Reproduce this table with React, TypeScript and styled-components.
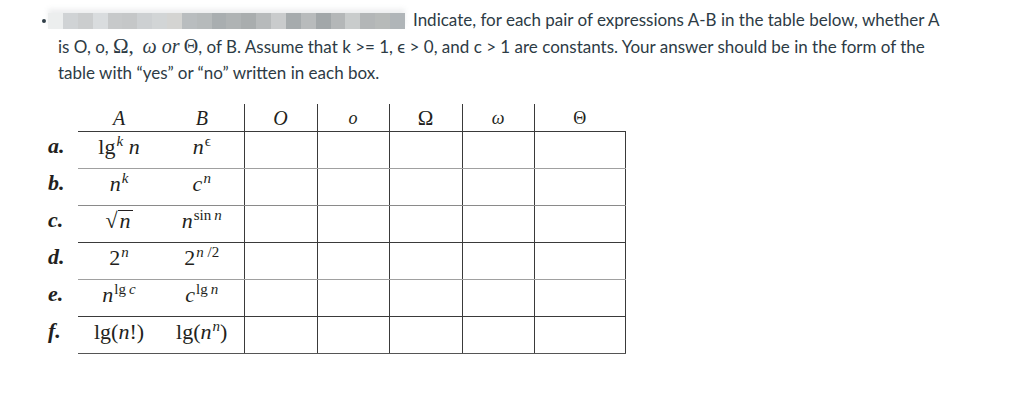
import React from 'react';
import styled, { createGlobalStyle } from 'styled-components';

const GlobalStyle = createGlobalStyle`
    html, body {
        margin: 0;
        padding: 0;
        background: #ffffff;
    }
    body {
        font-family: Lato, 'Liberation Sans', sans-serif;
        color: #2d3b45;
    }
`;

// mosaic colours of the redacted strip, left to right
const blurBlocks = [
    '#eceeee', '#d0d3d5', '#cbcdce', '#d9dcde', '#c7c9ca', '#c5c7c8', '#cdd0d2', '#d2d5d6',
    '#d4d4d2', '#b9bdbf', '#b6babb', '#a9aeb0', '#afb3b4', '#a9adae', '#b7babb', '#c9cbcc',
    '#a6abad', '#b8bbbc', '#a2a7a9', '#b4b7b8', '#c9cccc', '#b3b6b7', '#b7bab9', '#b0b5b8'
];

const blurGradient = blurBlocks
    .map((c, i) => {
        const from = ((i / blurBlocks.length) * 100).toFixed(2);
        const to = (((i + 1) / blurBlocks.length) * 100).toFixed(2);
        return `${c} ${from}%, ${c} ${to}%`;
    })
    .join(', ');

const Page = styled.div`
    width: 1030px;
    box-sizing: border-box;
    padding: 7px 0 0 44px;
`;

const Prompt = styled.p`
    position: relative;
    margin: 0 0 17px 14px;
    font-size: 17px;
    line-height: 26.5px;
    white-space: nowrap;

    &::before {
        content: '';
        position: absolute;
        left: -16px;
        top: 12px;
        width: 4px;
        height: 4px;
        border-radius: 50%;
        background: #2d3b45;
    }
`;

const Redacted = styled.span`
    display: inline-block;
    width: 357px;
    height: 16px;
    margin: 0 8px 0 -10px;
    vertical-align: -3px;
    background: linear-gradient(90deg, ${blurGradient});
    box-shadow: 0 -4px 5px rgba(215, 218, 220, 0.45);
    filter: blur(0.4px);
`;

const MathUp = styled.span<{ $size?: number }>`
    font-family: 'Liberation Serif', 'DejaVu Serif', serif;
    font-size: ${({ $size }) => $size ?? 20}px;
    line-height: 1;
`;

const MathIt = styled(MathUp)`
    font-style: italic;
`;

const Grid = styled.table`
    border-collapse: collapse;
    table-layout: fixed;
    width: 581px;
    font-family: 'Liberation Serif', 'DejaVu Serif', serif;
    color: #231f20;
`;

const Col = styled.col<{ $w: number }>`
    width: ${({ $w }) => $w}px;
`;

const HeadCell = styled.th<{ $sep?: boolean; $upright?: boolean; $size?: number }>`
    height: 22px;
    padding: 5px 0 0;
    font-weight: normal;
    font-style: ${({ $upright }) => ($upright ? 'normal' : 'italic')};
    font-size: ${({ $size }) => $size ?? 20}px;
    line-height: 19px;
    text-align: center;
    vertical-align: top;
    border-left: ${({ $sep }) => ($sep ? '1px solid #3a3a3a' : 'none')};
    border-bottom: 1px solid #3a3a3a;

    &:first-child {
        border-bottom: none;
    }
`;

const BodyRow = styled.tr<{ $rule: string }>`
    & > td:not(:first-child) {
        border-bottom: 1px solid ${({ $rule }) => $rule};
    }
`;

const Label = styled.td`
    height: 32px;
    padding: 4px 0 0 4px;
    font-size: 22px;
    font-weight: bold;
    font-style: italic;
    line-height: 22px;
    vertical-align: top;
`;

const Cell = styled.td<{ $sep?: boolean; $end?: boolean }>`
    height: 32px;
    padding: 4px 0 0;
    font-size: 22px;
    line-height: 22px;
    text-align: center;
    vertical-align: top;
    white-space: nowrap;
    border-left: ${({ $sep }) => ($sep ? '1px solid #3a3a3a' : 'none')};
    border-right: ${({ $end }) => ($end ? '1px solid #3a3a3a' : 'none')};
`;

const V = styled.i`
    font-style: italic;
`;

const Sup = styled.sup`
    font-size: 15px;
    line-height: 0;
    vertical-align: 8px;
    margin-left: 1px;
`;

const Op = styled.span`
    margin-right: 3px;
`;

const Radical = styled.span`
    display: inline-block;
    line-height: 22px;
`;

const Radicand = styled.span`
    display: inline-block;
    padding: 0 2px;
    border-top: 1px solid #231f20;
    line-height: 20px;
    font-style: italic;
`;

const rows: { key: string; a: React.ReactNode; b: React.ReactNode; rule: string }[] = [
    {
        key: 'a.',
        a: (
            <>
                lg<Sup><V>k</V></Sup> <V>n</V>
            </>
        ),
        b: (
            <>
                <V>n</V><Sup>ϵ</Sup>
            </>
        ),
        rule: '#a0a0a0'
    },
    {
        key: 'b.',
        a: (
            <>
                <V>n</V><Sup><V>k</V></Sup>
            </>
        ),
        b: (
            <>
                <V>c</V><Sup><V>n</V></Sup>
            </>
        ),
        rule: '#8a8a8a'
    },
    {
        key: 'c.',
        a: (
            <Radical>
                √<Radicand>n</Radicand>
            </Radical>
        ),
        b: (
            <>
                <V>n</V><Sup><Op>sin</Op><V>n</V></Sup>
            </>
        ),
        rule: '#3a3a3a'
    },
    {
        key: 'd.',
        a: (
            <>
                2<Sup><V>n</V></Sup>
            </>
        ),
        b: (
            <>
                2<Sup><V>n</V> /2</Sup>
            </>
        ),
        rule: '#a0a0a0'
    },
    {
        key: 'e.',
        a: (
            <>
                <V>n</V><Sup><Op>lg</Op><V>c</V></Sup>
            </>
        ),
        b: (
            <>
                <V>c</V><Sup><Op>lg</Op><V>n</V></Sup>
            </>
        ),
        rule: '#3a3a3a'
    },
    {
        key: 'f.',
        a: (
            <>
                lg(<V>n</V>!)
            </>
        ),
        b: (
            <>
                lg(<V>n</V><Sup><V>n</V></Sup>)
            </>
        ),
        rule: '#555555'
    }
];

const widths = [34, 82, 84, 73, 72, 73, 72, 91];

export default function App() {
    return (
        <Page>
            <GlobalStyle />
            <Prompt>
                <Redacted />
                Indicate, for each pair of expressions A-B in the table below, whether A
                <br />
                is O, o, <MathUp $size={21}>Ω,</MathUp>&nbsp; <MathIt $size={20}>ω or</MathIt>{' '}
                <MathUp $size={20}>Θ</MathUp>, of B. Assume that k &gt;= 1, ϵ &gt; 0, and c &gt; 1 are
                constants. Your answer should be in the form of the
                <br />
                table with “yes” or “no” written in each box.
            </Prompt>
            <Grid>
                <colgroup>
                    {widths.map((w, i) => (
                        <Col key={i} $w={w} />
                    ))}
                </colgroup>
                <thead>
                    <tr>
                        <HeadCell />
                        <HeadCell>A</HeadCell>
                        <HeadCell>B</HeadCell>
                        <HeadCell $sep>O</HeadCell>
                        <HeadCell $sep $size={18}>o</HeadCell>
                        <HeadCell $sep $upright $size={21}>Ω</HeadCell>
                        <HeadCell $sep $size={18}>ω</HeadCell>
                        <HeadCell $sep $upright $size={18}>Θ</HeadCell>
                    </tr>
                </thead>
                <tbody>
                    {rows.map((r) => (
                        <BodyRow key={r.key} $rule={r.rule}>
                            <Label>{r.key}</Label>
                            <Cell>{r.a}</Cell>
                            <Cell>{r.b}</Cell>
                            <Cell $sep />
                            <Cell $sep />
                            <Cell $sep />
                            <Cell $sep />
                            <Cell $sep $end />
                        </BodyRow>
                    ))}
                </tbody>
            </Grid>
        </Page>
    );
}
